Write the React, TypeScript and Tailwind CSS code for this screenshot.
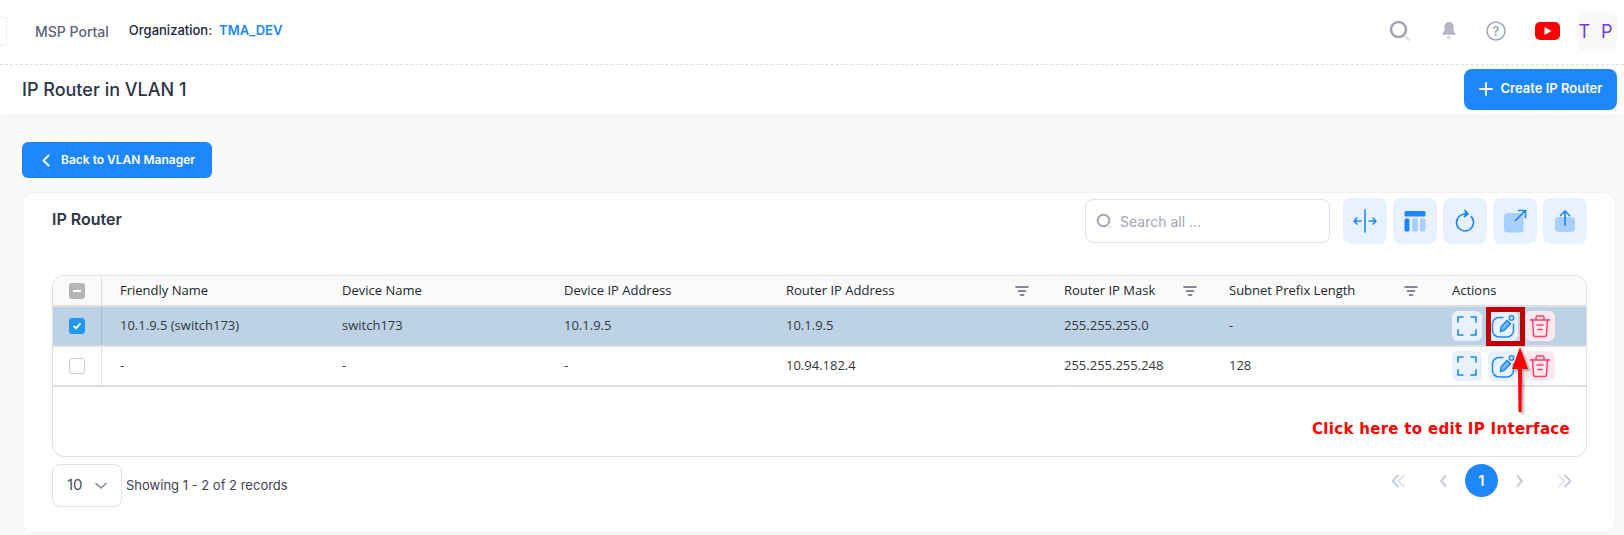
const cols = "grid grid-cols-[49px_222px_222px_222px_278px_165px_223px_1fr]";
const blue = "#1e87ff";

function Filter() {
  return (
    <svg width="16" height="12" viewBox="0 0 16 12" fill="none" stroke="#5e6278" strokeWidth="1.6" strokeLinecap="round">
      <path d="M2 2h12M4.5 6h7M6.5 10h3" />
    </svg>
  );
}

function Check({ kind }: { kind: "some" | "on" | "off" }) {
  if (kind === "some")
    return (
      <span className="w-4 h-4 rounded-[3px] bg-[#b5b5b8] flex items-center justify-center">
        <span className="w-2 h-[2px] bg-white" />
      </span>
    );
  if (kind === "on")
    return (
      <span className="w-4 h-4 rounded-[3px] bg-[#2196f3] flex items-center justify-center">
        <svg width="10" height="10" viewBox="0 0 10 10" fill="none" stroke="#fff" strokeWidth="1.8" strokeLinecap="round" strokeLinejoin="round">
          <path d="M2 5.3 4.1 7.3 8 2.9" />
        </svg>
      </span>
    );
  return <span className="w-4 h-4 rounded-[3px] bg-white border border-[#c3ccdb]" />;
}

function ActionIcons() {
  return (
    <div className="flex items-center">
      <button className="w-[30px] h-[30px] rounded-md bg-[#e8f1ff] flex items-center justify-center">
        <svg width="20" height="20" viewBox="0 0 20 20" fill="none" stroke={blue} strokeWidth="1.6" strokeLinecap="round">
          <path d="M1 6V1h5M14 1h5v5M19 14v5h-5M6 19H1v-5" />
        </svg>
      </button>
      <button className="ml-[6px] w-[30px] h-[30px] rounded-md bg-[#e8f1ff] flex items-center justify-center">
        <svg width="26" height="26" viewBox="0 0 26 26" fill="none" stroke={blue} strokeWidth="1.5" strokeLinecap="round" strokeLinejoin="round">
          <path d="M13 4.5H9a6.5 6.5 0 0 0-6.5 6.5v6.5A6.5 6.5 0 0 0 9 24h8a6.5 6.5 0 0 0 6.5-6.500V11" />
          <path d="M10.500 18.500 11 14l6-6.500 3.500 3.200-6 6.300z" fill={blue} fillOpacity="0.55" />
          <circle cx="21.500" cy="5" r="2.200" />
        </svg>
      </button>
      <button className="ml-[7px] w-[30px] h-[30px] rounded-md bg-[#ffe9ef] flex items-center justify-center">
        <svg width="22" height="24" viewBox="0 0 22 24" fill="none" stroke="#ff3d6b" strokeWidth="1.5" strokeLinecap="round" strokeLinejoin="round">
          <path d="M1.500 6h19M7 6V3.500A1.500 1.500 0 0 1 8.500 2h5A1.500 1.500 0 0 1 15 3.500V6" />
          <path d="M3.500 6l1 14.500A2 2 0 0 0 6.500 22.500h9a2 2 0 0 0 2-2L18.500 6" />
          <path d="M8 11h6M9 15.500h4" />
        </svg>
      </button>
    </div>
  );
}

function Row({ check, values, selected }: { check: "on" | "off"; values: string[]; selected?: boolean }) {
  return (
    <div className={`${cols} h-[40px] border-b-2 border-[#dedfe2] items-center text-[13px] text-[#33373d] ${selected ? "bg-[#bdd3e5]" : "bg-white"}`}>
      <div className={`h-full flex items-center justify-center border-r ${selected ? "border-[#a5bccf]" : "border-[#dedfe2]"}`}>
        <Check kind={check} />
      </div>
      {values.map((v, i) => (
        <div key={i} className="pl-[18px]">{v}</div>
      ))}
      <div className="pl-[18px]">
        <ActionIcons />
      </div>
    </div>
  );
}

function ToolBtn({ children }: { children: React.ReactNode }) {
  return <button className="w-[44px] h-[46px] rounded-lg bg-[#e8f1ff] flex items-center justify-center">{children}</button>;
}

function Chevrons({ dir, double }: { dir: "l" | "r"; double?: boolean }) {
  const flip = dir === "r" ? "scale(-1 1) translate(-16 0)" : undefined;
  return (
    <svg width="16" height="14" viewBox="0 0 16 14" fill="none" stroke="#c8cddd" strokeWidth="2" strokeLinecap="round" strokeLinejoin="round">
      <g transform={flip}>
        {double ? (
          <>
            <path d="M8 1.500 2.500 7 8 12.500" />
            <path d="M14 1.500 8.500 7 14 12.500" stroke="#e1e4ee" />
          </>
        ) : (
          <path d="M10.500 2 6 7l4.500 5" />
        )}
      </g>
    </svg>
  );
}

export default function App() {
  return (
    <div className="relative w-[1624px] h-[535px] overflow-hidden bg-[#f9f9f9] font-['Inter',sans-serif]">
      <header className="h-[65px] bg-white border-b border-dashed border-[#dcdff0] flex items-center pr-[7px]">
        <div className="w-[7px] h-[29px] -mt-[2px] bg-white border border-l-0 border-[#eceef3] rounded-r" />
        <span className="ml-[28px] text-[14px] font-medium text-[#5e6278] -mt-[2px]">MSP Portal</span>
        <span className="ml-[20px] text-[13px] font-medium text-[#20273d] -mt-[2px]">Organization:</span>
        <span className="ml-[7px] text-[13px] font-semibold text-[#1e87ff] -mt-[2px]">TMA_DEV</span>
        <div className="ml-auto flex items-center -mt-[2px]">
          <svg width="22" height="22" viewBox="0 0 22 22" fill="none">
            <circle cx="9.500" cy="9.500" r="7.500" stroke="#a1a5b7" strokeWidth="2.600" />
            <path d="M16 16l4 4" stroke="#dfe1e8" strokeWidth="2.200" strokeLinecap="round" />
          </svg>
          <svg className="ml-[29px]" width="18" height="20" viewBox="0 0 18 20">
            <path d="M9 1c-3 0-4.500 2.300-4.500 5v3.500L2.500 12.500a.8.8 0 0 0 .7 1.200h11.600a.8.8 0 0 0 .7-1.200L13.500 9.500V6C13.500 3.300 12 1 9 1z" fill="#b5b5c3" />
            <circle cx="9" cy="16.500" r="2" fill="#dbdbe3" />
          </svg>
          <svg className="ml-[28px]" width="20" height="20" viewBox="0 0 20 20" fill="none">
            <circle cx="10" cy="10" r="9" stroke="#a1a5b7" strokeWidth="1.500" />
            <text x="10" y="14.500" textAnchor="middle" fontSize="12.500" fontWeight="600" fill="#a1a5b7" fontFamily="Inter">?</text>
          </svg>
          <svg className="ml-[29px]" width="25" height="18" viewBox="0 0 25 18">
            <rect width="25" height="18" rx="5" fill="#ff0000" />
            <path d="M9.500 5v8l7-4z" fill="#fff" />
          </svg>
          <div className="ml-[17px] w-[40px] h-[40px] rounded-lg bg-[#f9f9f9] flex items-center justify-center text-[18px] text-[#7239ea] tracking-[3px]">
            T P
          </div>
        </div>
      </header>

      <div className="h-[49px] bg-white flex items-center justify-between pl-[22px] pr-[7px] shadow-[0_8px_16px_rgba(0,0,0,0.015)]">
        <h1 className="text-[18px] font-medium text-[#2e3447]">IP Router in VLAN 1</h1>
        <button className="w-[153px] h-[41px] rounded-lg bg-[#1e87ff] text-white text-[13px] font-semibold flex items-center justify-center gap-2 mt-[-1px]">
          <svg width="14" height="14" viewBox="0 0 14 14" stroke="#fff" strokeWidth="1.800" strokeLinecap="round">
            <path d="M7 1v12M1 7h12" />
          </svg>
          Create IP Router
        </button>
      </div>

      <main className="pl-[22px] pr-[8px] pt-[28px]">
        <button className="w-[190px] h-[36px] rounded-md bg-[#1e87ff] text-white text-[12px] font-semibold flex items-center pl-[20px] gap-[11px]">
          <svg width="8" height="13" viewBox="0 0 8 13" fill="none" stroke="#fff" strokeWidth="2" strokeLinecap="round" strokeLinejoin="round">
            <path d="M6.500 1.500 1.500 6.500l5 5" />
          </svg>
          Back to VLAN Manager
        </button>

        <section className="mt-[14px] h-[341px] bg-white border border-[#f1f1f4] rounded-xl pl-[29px] pr-[28px] pt-[5px]">
          <div className="flex items-center justify-between h-[46px]">
            <h2 className="text-[16px] font-semibold text-[#2e3447] -mt-[4px]">IP Router</h2>
            <div className="flex items-center">
              <div className="w-[245px] h-[44px] rounded-lg border border-[#dfe0ea] bg-white flex items-center pl-[10px] gap-[7px] text-[14px] text-[#a1a5b7]">
                <svg width="17" height="17" viewBox="0 0 17 17" fill="none">
                  <circle cx="7.500" cy="7.500" r="5.800" stroke="#a1a5b7" strokeWidth="2" />
                  <path d="M12 12l3 3" stroke="#dfe1e8" strokeWidth="1.500" strokeLinecap="round" />
                </svg>
                Search all ...
              </div>
              <div className="ml-[13px] flex items-center gap-[6px]">
                <ToolBtn>
                  <svg width="26" height="24" viewBox="0 0 26 24" fill="none" stroke={blue} strokeWidth="1.600" strokeLinecap="round" strokeLinejoin="round">
                    <path d="M13 1v22M9 12H2M5 9l-3 3 3 3M17 12h7M21 9l3 3-3 3" />
                  </svg>
                </ToolBtn>
                <ToolBtn>
                  <svg width="22" height="22" viewBox="0 0 22 22">
                    <rect x="0.500" y="1" width="21" height="5.500" rx="1.500" fill={blue} />
                    <rect x="0.500" y="8.500" width="5" height="13" rx="1.500" fill={blue} />
                    <rect x="8" y="8.500" width="6" height="13" rx="1.500" fill="#a8cfff" />
                    <rect x="16" y="8.500" width="5.500" height="13" rx="1.500" fill="#a8cfff" />
                  </svg>
                </ToolBtn>
                <ToolBtn>
                  <svg width="22" height="24" viewBox="0 0 22 24" fill="none" stroke={blue} strokeWidth="1.700" strokeLinecap="round" strokeLinejoin="round">
                    <path d="M11 5a8.500 8.500 0 1 0 8.500 8.500c0-2.300-.8-4.300-2.200-5.800" />
                    <path d="M11 1.500 14 5l-3.500 2.500" fill={blue} />
                  </svg>
                </ToolBtn>
                <ToolBtn>
                  <svg width="24" height="24" viewBox="0 0 24 24" fill="none">
                    <rect x="1" y="4" width="19.500" height="19.500" rx="3.500" fill="#a8cfff" />
                    <path d="M12.500 11.500 22 2M15.500 1.500H22.500V8.500" stroke={blue} strokeWidth="1.700" strokeLinecap="round" strokeLinejoin="round" />
                  </svg>
                </ToolBtn>
                <ToolBtn>
                  <svg width="22" height="24" viewBox="0 0 22 24" fill="none">
                    <rect x="1" y="8" width="20" height="15" rx="4" fill="#a8cfff" />
                    <path d="M11 16V2M6.500 6.500 11 2l4.500 4.500" stroke={blue} strokeWidth="1.700" strokeLinecap="round" strokeLinejoin="round" />
                  </svg>
                </ToolBtn>
              </div>
            </div>
          </div>

          <div className="mt-[31px] h-[182px] border border-[#dedfe2] rounded-xl overflow-hidden bg-white font-['Open_Sans',sans-serif]">
            <div className={`${cols} h-[31px] border-b-2 border-[#dedfe2] bg-[#fafafa] items-center text-[13px] text-[#22262e]`}>
              <div className="h-full flex items-center justify-center border-r border-[#dedfe2]">
                <Check kind="some" />
              </div>
              <div className="pl-[18px]">Friendly Name</div>
              <div className="pl-[18px]">Device Name</div>
              <div className="pl-[18px]">Device IP Address</div>
              <div className="pl-[18px] pr-[16px] flex items-center justify-between">
                <span>Router IP Address</span>
                <Filter />
              </div>
              <div className="pl-[18px] pr-[13px] flex items-center justify-between">
                <span>Router IP Mask</span>
                <Filter />
              </div>
              <div className="pl-[18px] pr-[15px] flex items-center justify-between">
                <span>Subnet Prefix Length</span>
                <Filter />
              </div>
              <div className="pl-[18px]">Actions</div>
            </div>
            <Row selected check="on" values={["10.1.9.5 (switch173)", "switch173", "10.1.9.5", "10.1.9.5", "255.255.255.0", "-"]} />
            <Row check="off" values={["-", "-", "-", "10.94.182.4", "255.255.255.248", "128"]} />
          </div>

          <div className="mt-[7px] flex items-start justify-between">
            <div className="flex items-center">
              <div className="w-[70px] h-[43px] rounded-lg border border-[#dfe0ea] flex items-center pl-[14px] gap-[12px] text-[15px] text-[#4b5168]">
                10
                <svg width="12" height="8" viewBox="0 0 12 8" fill="none" stroke="#7e8299" strokeWidth="1.600" strokeLinecap="round" strokeLinejoin="round">
                  <path d="M1 1.500 6 6l5-4.500" />
                </svg>
              </div>
              <span className="ml-[4px] text-[13px] text-[#3f4254]">Showing 1 - 2 of 2 records</span>
            </div>
            <nav className="flex items-center">
              <Chevrons dir="l" double />
              <span className="ml-[29px]"><Chevrons dir="l" /></span>
              <span className="ml-[14px] w-[33px] h-[33px] rounded-full bg-[#1e87ff] text-white text-[14px] font-semibold flex items-center justify-center">1</span>
              <span className="ml-[14px]"><Chevrons dir="r" /></span>
              <span className="ml-[29px]"><Chevrons dir="r" double /></span>
              <span className="w-[14px]" />
            </nav>
          </div>
        </section>
      </main>

      <div className="absolute left-[1486px] top-[307px] w-[39px] h-[39px] border-[5px] border-[#c00000]" />
      <svg className="absolute left-[1508px] top-[346px] drop-shadow-[2px_2px_1px_rgba(0,0,0,0.35)]" width="24" height="68" viewBox="0 0 24 68">
        <path d="M12 1 20 23H14L13.500 66H10.500L10 23H4z" fill="#ff0000" />
      </svg>
      <span className="absolute left-[1312px] top-[418px] text-[15px] font-bold text-[#ff0000] tracking-[0.3px] font-['DejaVu_Sans',sans-serif] whitespace-nowrap">
        Click here to edit IP Interface
      </span>
    </div>
  );
}
